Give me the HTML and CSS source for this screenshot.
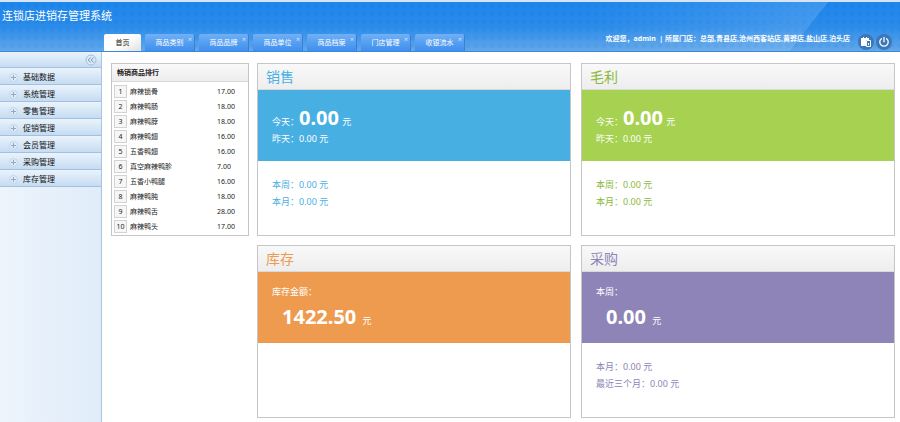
FILE: index.html
```html
<!DOCTYPE html>
<html lang="zh-CN">
<head>
    <meta charset="UTF-8">
    <meta name="viewport" content="width=device-width, initial-scale=1.0">
    <title>连锁店进销存管理系统</title>
    <link rel="stylesheet" href="styles.css">
</head>
<body>
    <header class="topo">
        <h1>连锁店进销存管理系统</h1>
        <div class="bar">
            <nav class="tabs">
                <a href="#" class="tab active">首页</a>
                <div class="tab"><a href="#">商品类别</a><button type="button" class="close" aria-label="关闭">×</button></div>
                <div class="tab"><a href="#">商品品牌</a><button type="button" class="close" aria-label="关闭">×</button></div>
                <div class="tab"><a href="#">商品单位</a><button type="button" class="close" aria-label="关闭">×</button></div>
                <div class="tab"><a href="#">商品档案</a><button type="button" class="close" aria-label="关闭">×</button></div>
                <div class="tab"><a href="#">门店管理</a><button type="button" class="close" aria-label="关闭">×</button></div>
                <div class="tab"><a href="#">收银流水</a><button type="button" class="close" aria-label="关闭">×</button></div>
            </nav>
            <div class="user">
                <p>欢迎您，admin &nbsp;| 所属门店：总部,青县店,沧州西客站店,黄骅店,盐山店,泊头店</p>
                <button type="button" class="round" aria-label="切换门店">
                    <svg viewBox="0 0 16 16" width="16" height="16">
                        <path d="M3 4h2V3h1v1h2V3h1v1h2v2H8v6H3z" fill="#fff"/>
                        <path d="M8.500 6.500h4v6h-4z" fill="#3b78b8" stroke="#fff"/>
                        <path d="M10 9h1v2h-1z" fill="#fff"/>
                    </svg>
                </button>
                <button type="button" class="round" aria-label="退出">
                    <svg viewBox="0 0 16 16" width="16" height="16" fill="none" stroke="#fff" stroke-width="1.300" stroke-linecap="round">
                        <path d="M5.400 4.700a4.200 4.200 0 1 0 5.200 0M8 3.300v4.500"/>
                    </svg>
                </button>
            </div>
        </div>
    </header>

    <div class="layout">
        <aside class="sidebar">
            <div class="side-head">
                <button type="button" class="collapse" aria-label="收起菜单">
                    <svg viewBox="0 0 12 12" width="12" height="12">
                        <circle cx="6" cy="6" r="5" fill="#dce9f6" stroke="#a5bfdb"/>
                        <path d="M5.700 3.500L3.300 6l2.400 2.500M8.700 3.500L6.300 6l2.400 2.500" fill="none" stroke="#6f93bb"/>
                    </svg>
                </button>
            </div>
            <ul class="menu">
                <li><a href="#">基础数据</a></li>
                <li><a href="#">系统管理</a></li>
                <li><a href="#">零售管理</a></li>
                <li><a href="#">促销管理</a></li>
                <li><a href="#">会员管理</a></li>
                <li><a href="#">采购管理</a></li>
                <li><a href="#">库存管理</a></li>
            </ul>
        </aside>

        <main class="content">
            <section class="panel ranking">
                <h2>畅销商品排行</h2>
                <table>
                    <tr><td><span class="pos">1</span></td><td>麻辣锁骨</td><td>17.00</td></tr>
                    <tr><td><span class="pos">2</span></td><td>麻辣鸭肠</td><td>18.00</td></tr>
                    <tr><td><span class="pos">3</span></td><td>麻辣鸭脖</td><td>18.00</td></tr>
                    <tr><td><span class="pos">4</span></td><td>麻辣鸭翅</td><td>16.00</td></tr>
                    <tr><td><span class="pos">5</span></td><td>五香鸭翅</td><td>16.00</td></tr>
                    <tr><td><span class="pos">6</span></td><td>真空麻辣鸭胗</td><td>7.00</td></tr>
                    <tr><td><span class="pos">7</span></td><td>五香小鸭腿</td><td>16.00</td></tr>
                    <tr><td><span class="pos">8</span></td><td>麻辣鸭肫</td><td>18.00</td></tr>
                    <tr><td><span class="pos">9</span></td><td>麻辣鸭舌</td><td>28.00</td></tr>
                    <tr><td><span class="pos">10</span></td><td>麻辣鸭头</td><td>17.00</td></tr>
                </table>
            </section>

            <div class="cards">
                <section class="panel card blue">
                    <h2>销售</h2>
                    <div class="band">
                        <p class="total">今天：<strong>0.00</strong> 元</p>
                        <p>昨天：0.00 元</p>
                    </div>
                    <div class="rest">
                        <p>本周：0.00 元</p>
                        <p>本月：0.00 元</p>
                    </div>
                </section>
                <section class="panel card green">
                    <h2>毛利</h2>
                    <div class="band">
                        <p class="total">今天：<strong>0.00</strong> 元</p>
                        <p>昨天：0.00 元</p>
                    </div>
                    <div class="rest">
                        <p>本周：0.00 元</p>
                        <p>本月：0.00 元</p>
                    </div>
                </section>
                <section class="panel card orange">
                    <h2>库存</h2>
                    <div class="band">
                        <p>库存金额：</p>
                        <p class="total indent"><strong>1422.50</strong> 元</p>
                    </div>
                    <div class="rest"></div>
                </section>
                <section class="panel card purple">
                    <h2>采购</h2>
                    <div class="band">
                        <p>本周：</p>
                        <p class="total indent"><strong>0.00</strong> 元</p>
                    </div>
                    <div class="rest">
                        <p>本月：0.00 元</p>
                        <p>最近三个月：0.00 元</p>
                    </div>
                </section>
            </div>
        </main>
    </div>
</body>
</html>
```
FILE: styles.css
```css
:root {
    --line: #c6c6c6;
    --blue: #48afe3;
    --green: #a6d151;
    --orange: #ee9b4f;
    --purple: #8f84b7;
}
* { box-sizing: border-box; margin: 0; padding: 0; }
body {
    display: flex; flex-direction: column; min-height: 100vh;
    font-family: "Noto Sans", "Noto Sans CJK SC", sans-serif;
    font-size: 9px; color: #222; background: #fff;
}
a { color: inherit; text-decoration: none; }
button { border: none; background: none; font-family: inherit; color: inherit; cursor: pointer; }
ul { list-style: none; }

/* header */
.topo {
    position: relative; display: flex; flex-direction: column; justify-content: space-between;
    height: 52px; color: #fff;
    border-top: 2px solid #d6e4f6; border-bottom: 1px solid #3f86d6;
    background:
        radial-gradient(circle, rgba(0, 70, 170, 0.07) 1px, transparent 3px) 0 0 / 8px 8px,
        linear-gradient(#1d86ec 0%, #2a8bea 50%, #62a8ea 100%);
}
.topo::before {
    content: ""; position: absolute; top: 0; bottom: 0; right: 72px; width: 240px;
    background: linear-gradient(90deg, transparent, rgba(255, 255, 255, 0.14));
    clip-path: polygon(0 0, 100% 0, 84% 100%, 0 100%);
}
.topo h1 { padding: 4px 2px; font-size: 11px; line-height: 20px; font-weight: 400; }
.bar { position: relative; display: flex; justify-content: space-between; align-items: flex-end; }
.tabs { display: flex; align-items: flex-end; gap: 4px; padding-left: 104px; }
.tab {
    position: relative; width: 50px; height: 17px; text-align: center;
    font-size: 7px; line-height: 18px; border-radius: 2px 2px 0 0;
    border-right: 1px solid #3a80d2;
    background: linear-gradient(#70b0f6, #3d8fee);
}
.tab.active {
    width: 37px; color: #222; border-right: none;
    background: linear-gradient(150deg, #fff 50%, #e0e0e0);
}
.tab a { display: block; }
.close { position: absolute; top: 2px; right: 2px; font-size: 7px; line-height: 7px; color: #d5e8ff; }
.user { display: flex; align-items: center; gap: 2px; padding: 0 8px 1px 0; }
.user p { margin: 0 6px 6px 0; font-size: 7px; line-height: 10px; font-weight: 700; white-space: nowrap; }
.round { width: 16px; height: 16px; border-radius: 50%; background: #3b78b8; }
.round svg, .collapse svg { display: block; }

/* left menu */
.layout { flex: 1; display: flex; }
.sidebar {
    width: 102px; flex-shrink: 0; border-right: 1px solid #a9c4e2;
    background: linear-gradient(90deg, #edf4fc, #e0ecf9);
}
.side-head, .menu li {
    border-bottom: 1px solid #a3c0de;
    background: linear-gradient(#eaf3fc, #c6dcf2);
}
.side-head { display: flex; justify-content: flex-end; align-items: center; height: 16px; padding-right: 4px; }
.menu a {
    position: relative; display: block; height: 16px; padding-left: 23px;
    font-size: 8px; line-height: 17px; color: #111;
}
/* small plus mark before each entry */
.menu a::before {
    content: ""; position: absolute; left: 9px; top: 5px; width: 7px; height: 7px;
    border-radius: 50%; border: 1px solid #c3d6ea;
    background:
        linear-gradient(#8faac8, #8faac8) center / 5px 1px no-repeat,
        linear-gradient(#8faac8, #8faac8) center / 1px 5px no-repeat,
        #dfeaf6;
}

/* dashboard */
.content { flex: 1; display: flex; align-items: flex-start; gap: 8px; padding: 11px 5px 4px 9px; }
.panel { border: 1px solid var(--line); background: #fff; }
.panel h2 { border-bottom: 1px solid #d9d9d9; background: linear-gradient(#f9f9f9, #ededed); }
.ranking { width: 138px; flex-shrink: 0; }
.ranking h2 { padding-left: 5px; font-size: 7px; line-height: 17px; }
.ranking table { width: 100%; margin: 2px 0 1px; border-collapse: collapse; font-size: 7px; }
.ranking td { height: 15px; line-height: 13px; }
.ranking td:first-child { width: 18px; padding-left: 2px; }
.ranking td:last-child { width: 31px; }
.pos {
    display: block; width: 13px; height: 13px; line-height: 11px; text-align: center;
    border: 1px solid #d3d3d3; background: #f6f6f6;
}

.cards { flex: 1; display: grid; grid-template-columns: 1fr 1fr; gap: 9px 10px; }
.card h2 { height: 26px; padding-left: 8px; font-size: 14px; line-height: 26px; font-weight: 400; }
.card p { line-height: 17px; }
.band { min-height: 71px; padding: 11px 14px; color: #fff; }
.card .total { margin-top: 4px; }
.total strong { margin-right: 1px; font-size: 20px; line-height: 25px; }
.indent { padding-left: 10px; }
.indent strong { margin-right: 4px; }
.rest { min-height: 74px; padding: 15px 14px; }

.blue { color: var(--blue); }
.blue .band { background: var(--blue); }
.green { color: #8cb83a; }
.green .band { background: var(--green); }
.orange { color: var(--orange); }
.orange .band { background: var(--orange); }
.purple { color: var(--purple); }
.purple .band { background: var(--purple); }
```
